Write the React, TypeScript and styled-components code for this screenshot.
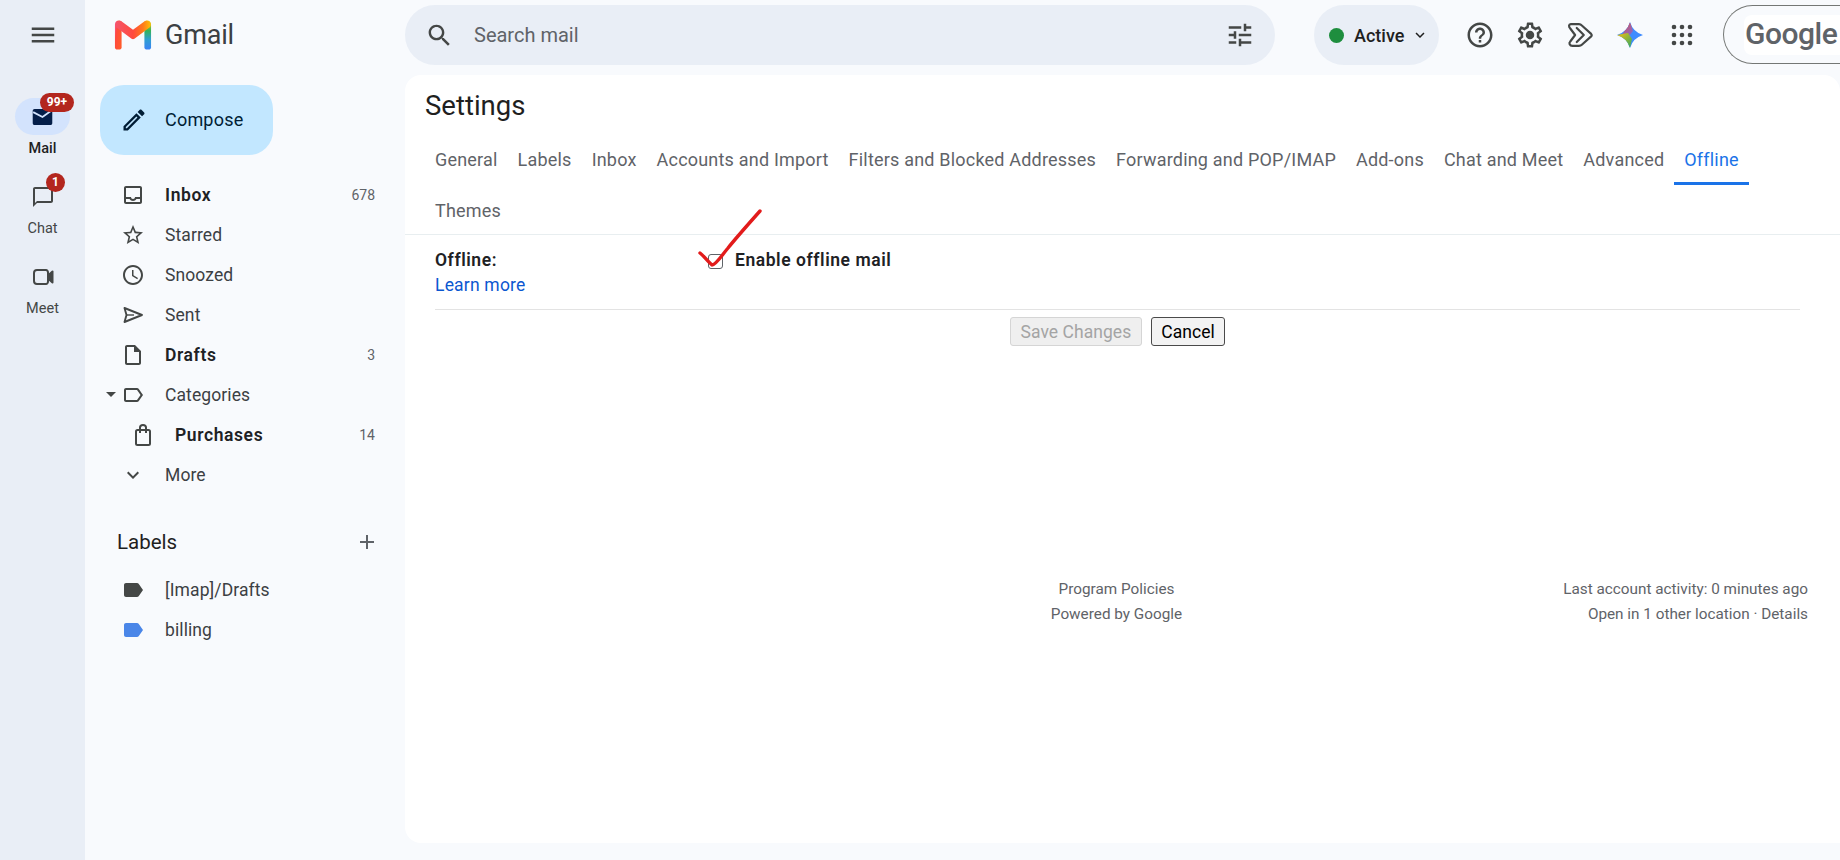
import React from "react";
import styled, { createGlobalStyle } from "styled-components";

const Global = createGlobalStyle`
  html, body { margin: 0; padding: 0; height: 100%; overflow: hidden; background: #f8fafd; }
  body { font-family: Roboto, "Liberation Sans", sans-serif; color: #1f1f1f; }
`;

const Shell = styled.div`
  display: grid;
  grid-template-columns: 85px 320px minmax(0, 1fr);
  grid-template-rows: 75px minmax(0, 1fr);
  width: 1840px;
  height: 860px;
  overflow: hidden;
  background: #f8fafd;
`;
const Rail = styled.nav`
  grid-row: 1 / 3;
  background: #e9eef6;
  display: flex;
  flex-direction: column;
  align-items: center;
  padding-top: 20px;
`;
const Burger = styled.div`
  height: 30px;
  display: flex;
  align-items: center;
  margin-bottom: 48px;
  color: #444746;
`;
const RailItem = styled.div<{ $active?: boolean }>`
  display: flex;
  flex-direction: column;
  align-items: center;
  height: 80px;
  font-size: 14.5px;
  line-height: 18px;
  font-weight: ${(p) => (p.$active ? 500 : 400)};
  color: ${(p) => (p.$active ? "#1f1f1f" : "#444746")};
`;
const RailIcon = styled.div<{ $active?: boolean }>`
  position: relative;
  width: 55px;
  height: 37px;
  border-radius: 19px;
  margin-bottom: 5px;
  display: flex;
  align-items: center;
  justify-content: center;
  background: ${(p) => (p.$active ? "#d3e3fd" : "transparent")};
  color: #444746;
`;
const Badge = styled.span<{ $wide?: boolean }>`
  position: absolute;
  top: -5px;
  left: ${(p) => (p.$wide ? "25px" : "31px")};
  height: 19px;
  min-width: ${(p) => (p.$wide ? "34px" : "19px")};
  border-radius: 10px;
  background: #b3261e;
  color: #fff;
  font-size: 12px;
  font-weight: 700;
  line-height: 19px;
  text-align: center;
`;
const Brand = styled.div`
  display: flex;
  align-items: center;
  padding: 0 0 5px 29px;
  gap: 13px;
  font-size: 27px;
  color: #3c4043;
  letter-spacing: -0.2px;
`;
const TopBar = styled.header`
  display: flex;
  align-items: flex-start;
  padding-top: 5px;
`;
const Search = styled.div`
  width: 870px;
  height: 60px;
  flex: none;
  border-radius: 30px;
  background: #e9eef6;
  display: flex;
  align-items: center;
  padding: 0 20px;
  box-sizing: border-box;
  color: #444746;
  font-size: 20px;
`;
const SearchText = styled.span`
  flex: 1;
  margin-left: 20px;
  color: #5f6368;
`;
const Status = styled.div`
  margin-left: 39px;
  width: 125px;
  height: 60px;
  flex: none;
  border-radius: 30px;
  background: #e9eef6;
  display: flex;
  align-items: center;
  padding-left: 15px;
  box-sizing: border-box;
  font-size: 18px;
  font-weight: 500;
  color: #1f1f1f;
  gap: 10px;
`;
const Dot = styled.span`
  width: 15px;
  height: 15px;
  border-radius: 50%;
  background: #1e8e3e;
`;
const Chevron = styled.svg`
  margin-left: -3px;
`;
const Actions = styled.div`
  display: flex;
  align-items: center;
  height: 60px;
  margin-left: 16px;
  color: #444746;
`;
const ActionSlot = styled.div`
  width: 50px;
  display: flex;
  justify-content: center;
  align-items: center;
`;
const AppsSlot = styled(ActionSlot)`
  padding-left: 4px;
  box-sizing: border-box;
`;
const GoogleChip = styled.div`
  margin-left: 18px;
  width: 160px;
  height: 59px;
  flex: none;
  box-sizing: border-box;
  border: 1px solid #747775;
  border-right: none;
  border-radius: 30px 0 0 30px;
  display: flex;
  align-items: center;
  padding-left: 20px;
`;
const GoogleWord = styled.span`
  display: block;
  padding: 0 1px;
  width: 100%;
  height: 40px;
  line-height: 38px;
  border-radius: 8px;
  background: #fff;
  color: #5f6368;
  font-size: 30px;
  font-weight: 500;
  letter-spacing: -0.5px;
`;
const Side = styled.aside`
  display: flex;
  flex-direction: column;
`;
const Compose = styled.div`
  margin: 10px 0 0 15px;
  width: 173px;
  height: 70px;
  border-radius: 24px;
  background: #c2e7ff;
  display: flex;
  align-items: center;
  padding: 0 0 1px 20px;
  box-sizing: border-box;
  gap: 17px;
  font-size: 18px;
  font-weight: 400;
  letter-spacing: 0.2px;
  color: #001d35;
`;
const NavList = styled.div`
  margin-top: 20px;
`;
const Row = styled.div<{ $bold?: boolean; $indent?: boolean }>`
  height: 40px;
  display: flex;
  align-items: center;
  padding: 0 30px 0 ${(p) => (p.$indent ? "46px" : "36px")};
  font-size: 17.5px;
  font-weight: ${(p) => (p.$bold ? 600 : 400)};
  letter-spacing: ${(p) => (p.$bold ? "0.6px" : "0.1px")};
  color: ${(p) => (p.$bold ? "#202124" : "#3c4043")};
  position: relative;
`;
const RowIcon = styled.span<{ $tint?: string }>`
  width: 24px;
  height: 24px;
  margin-right: 20px;
  color: ${(p) => p.$tint ?? "#444746"};
  display: flex;
`;
const RowLabel = styled.span`
  flex: 1;
`;
const Count = styled.span`
  font-size: 14px;
  font-weight: 400;
  letter-spacing: 0;
  color: #5f6368;
`;
const Caret = styled.span`
  position: absolute;
  left: 21px;
  top: 17px;
  width: 0;
  height: 0;
  border: 5px solid transparent;
  border-top-color: #444746;
  border-bottom: 0;
`;
const LabelsHead = styled.div`
  margin-top: 27px;
  margin-bottom: 8px;
  height: 40px;
  display: flex;
  align-items: center;
  padding: 0 26px 0 32px;
  font-size: 20.5px;
  font-weight: 400;
  color: #1f1f1f;
  justify-content: space-between;
`;
const AddIcon = styled.span`
  color: #5f6368;
  display: flex;
`;
const Panel = styled.main`
  background: #fff;
  border-radius: 16px 16px 0 16px;
  margin-bottom: 17px;
  min-width: 0;
  display: flex;
  flex-direction: column;
  position: relative;
`;
const Title = styled.h1`
  margin: 0;
  height: 61px;
  padding: 8px 0 0 20px;
  box-sizing: border-box;
  font-size: 27.5px;
  line-height: 46px;
  font-weight: 400;
  color: #1f1f1f;
`;
const Tabs = styled.div`
  display: flex;
  flex-wrap: wrap;
  padding: 0 40px 0 20px;
  border-bottom: 1px solid #e8eef0;
`;
const Tab = styled.div<{ $active?: boolean }>`
  height: 49px;
  padding: 0 10px;
  line-height: 48px;
  font-size: 18px;
  letter-spacing: 0.2px;
  color: ${(p) => (p.$active ? "#1a73e8" : "#5f6368")};
  box-sizing: border-box;
  border-bottom: 3px solid ${(p) => (p.$active ? "#1a73e8" : "transparent")};
  white-space: nowrap;
  &:last-child {
    line-height: 52px;
  }
`;
const OfflineRow = styled.div`
  display: flex;
  margin: 0 40px 0 30px;
  height: 75px;
  padding-top: 13px;
  box-sizing: border-box;
  border-bottom: 1px solid #e3e3e3;
  font-size: 17.5px;
`;
const RowHead = styled.div`
  width: 273px;
  line-height: 25px;
`;
const Strong = styled.div`
  font-weight: 600;
  letter-spacing: 0.55px;
  color: #202124;
`;
const Link = styled.div`
  color: #0b57d0;
  letter-spacing: 0.2px;
`;
const CheckLine = styled.label`
  display: flex;
  align-items: flex-start;
  line-height: 25px;
  font-weight: 600;
  letter-spacing: 0.55px;
  color: #202124;
`;
const Box = styled.span`
  width: 15px;
  height: 15px;
  margin: 6px 12px 0 0;
  box-sizing: border-box;
  border: 1.5px solid #5f6368;
  border-radius: 3px;
`;
const Mark = styled.svg`
  position: absolute;
  left: 287px;
  top: 134px;
`;
const Buttons = styled.div`
  display: flex;
  padding: 7px 0 0 605px;
  gap: 9px;
`;
const Btn = styled.div<{ $off?: boolean }>`
  height: 29px;
  box-sizing: border-box;
  padding: 0 9.5px;
  display: flex;
  align-items: center;
  font-size: 17.5px;
  letter-spacing: 0.05px;
  border-radius: 3px;
  border: 1px solid ${(p) => (p.$off ? "#d5d5d5" : "#4a4a4a")};
  background: ${(p) => (p.$off ? "#efefef" : "#f3f3f3")};
  color: ${(p) => (p.$off ? "#a4a4a4" : "#000")};
`;
const Footer = styled.footer`
  display: flex;
  justify-content: space-between;
  margin-top: 231px;
  padding: 0 32px 0 645px;
  font-size: 15.3px;
  line-height: 25px;
  color: #5f6368;
`;
const FootMid = styled.div`
  text-align: center;
  width: 133px;
  white-space: nowrap;
`;
const FootRight = styled.div`
  text-align: right;
`;

const I = ({ d, s = 24 }: { d: string; s?: number }) => (
  <svg width={s} height={s} viewBox="0 0 24 24" fill="currentColor"><path d={d} fillRule="evenodd" /></svg>
);

const P = {
  menu: "M3 18h18v-2H3v2zm0-5h18v-2H3v2zm0-7v2h18V6H3z",
  star: "M22 9.24l-7.19-.62L12 2 9.19 8.63 2 9.24l5.46 4.73L5.82 21 12 17.27 18.18 21l-1.63-7.03L22 9.24zM12 15.4l-3.76 2.27 1-4.28-3.32-2.88 4.38-.38L12 6.1l1.71 4.04 4.38.38-3.32 2.88 1 4.28L12 15.4z",
  clock: "M11.99 2C6.47 2 2 6.48 2 12s4.47 10 9.99 10C17.52 22 22 17.52 22 12S17.52 2 11.99 2zM12 20c-4.42 0-8-3.58-8-8s3.58-8 8-8 8 3.58 8 8-3.58 8-8 8zm.5-13H11v6l5.25 3.15.75-1.23-4.5-2.67z",
  inbox: "M19 3H5c-1.1 0-2 .9-2 2v14c0 1.1.9 2 2 2h14c1.1 0 2-.9 2-2V5c0-1.1-.9-2-2-2zm0 16H5v-3h3.56c.69 1.19 1.97 2 3.45 2s2.75-.81 3.45-2H19v3zm0-5h-4.99c0 1.1-.9 2-2 2s-2-.9-2-2H5V5h14v9z",
  draft: "M14 2H6c-1.1 0-1.99.9-1.99 2L4 20c0 1.1.89 2 1.99 2H18c1.1 0 2-.9 2-2V8l-6-6zM6 20V4h7v5h5v11H6z",
  labelO: "M17.63 5.84C17.27 5.33 16.67 5 16 5L5 5.01C3.9 5.01 3 5.9 3 7v10c0 1.1.9 1.99 2 1.99L16 19c.67 0 1.27-.33 1.63-.84L22 12l-4.37-6.16zM16 17H5V7h11l3.55 5L16 17z",
  labelF: "M17.63 5.84C17.27 5.33 16.67 5 16 5L5 5.01C3.9 5.01 3 5.9 3 7v10c0 1.1.9 1.99 2 1.99L16 19c.67 0 1.27-.33 1.63-.84L22 12l-4.37-6.16z",
  more: "M16.59 8.59L12 13.17 7.41 8.59 6 10l6 6 6-6z",
  add: "M19 13h-6v6h-2v-6H5v-2h6V5h2v6h6v2z",
  search: "M15.5 14h-.79l-.28-.27C15.41 12.59 16 11.11 16 9.5 16 5.91 13.09 3 9.5 3S3 5.91 3 9.5 5.91 16 9.5 16c1.61 0 3.09-.59 4.23-1.57l.27.28v.79l5 4.99L20.49 19l-4.99-5zm-6 0C7.01 14 5 11.99 5 9.5S7.01 5 9.5 5 14 7.01 14 9.5 11.99 14 9.5 14z",
  tune: "M3 17v2h6v-2H3zM3 5v2h10V5H3zm10 16v-2h8v-2h-8v-2h-2v6h2zM7 9v2H3v2h4v2h2V9H7zm14 4v-2H11v2h10zm-6-4h2V7h4V5h-4V3h-2v6z",
  help: "M11 18h2v-2h-2v2zm1-16C6.48 2 2 6.48 2 12s4.48 10 10 10 10-4.48 10-10S17.52 2 12 2zm0 18c-4.41 0-8-3.59-8-8s3.59-8 8-8 8 3.59 8 8-3.59 8-8 8zm0-14c-2.21 0-4 1.79-4 4h2c0-1.1.9-2 2-2s2 .9 2 2c0 2-3 1.75-3 5h2c0-2.25 3-2.5 3-5 0-2.21-1.79-4-4-4z",
  chat: "M20 2H4c-1.1 0-2 .9-2 2v18l4-4h14c1.1 0 2-.9 2-2V4c0-1.1-.9-2-2-2zm0 14H6l-2 2V4h16v12z",
  pen: "M3 17.25V21h3.75L17.81 9.94l-3.75-3.75L3 17.25zM5.92 19H5v-.92l9.06-9.06.92.92L5.92 19zM20.71 5.63l-2.34-2.34c-.2-.2-.45-.29-.71-.29s-.51.1-.7.29l-1.83 1.83 3.75 3.75 1.83-1.83c.39-.39.39-1.02 0-1.41z",
  gear: "M19.43 12.98c.04-.32.07-.64.07-.98 0-.34-.03-.66-.07-.98l2.11-1.65c.19-.15.24-.42.12-.64l-2-3.46c-.09-.16-.26-.25-.44-.25-.06 0-.12.01-.17.03l-2.49 1c-.52-.4-1.08-.73-1.69-.98l-.38-2.65C14.46 2.18 14.25 2 14 2h-4c-.25 0-.46.18-.49.42l-.38 2.65c-.61.25-1.17.59-1.69.98l-2.49-1c-.06-.02-.12-.03-.18-.03-.17 0-.34.09-.43.25l-2 3.46c-.13.22-.07.49.12.64l2.11 1.65c-.04.32-.07.65-.07.98 0 .33.03.66.07.98l-2.11 1.65c-.19.15-.24.42-.12.64l2 3.46c.09.16.26.25.44.25.06 0 .12-.01.17-.03l2.49-1c.52.4 1.08.73 1.69.98l.38 2.65c.03.24.24.42.49.42h4c.25 0 .46-.18.49-.42l.38-2.65c.61-.25 1.17-.59 1.69-.98l2.49 1c.06.02.12.03.18.03.17 0 .34-.09.43-.25l2-3.46c.12-.22.07-.49-.12-.64l-2.11-1.65zm-1.98-1.71c.04.31.05.52.05.73 0 .21-.02.43-.05.73l-.14 1.13.89.7 1.08.84-.7 1.21-1.27-.51-1.04-.42-.9.68c-.43.32-.84.56-1.25.73l-1.06.43-.16 1.13-.2 1.35h-1.4l-.19-1.35-.16-1.13-1.06-.43c-.43-.18-.83-.41-1.23-.71l-.91-.7-1.06.43-1.27.51-.7-1.21 1.08-.84.89-.7-.14-1.13c-.03-.31-.05-.54-.05-.74s.02-.43.05-.73l.14-1.13-.89-.7-1.08-.84.7-1.21 1.27.51 1.04.42.9-.68c.43-.32.84-.56 1.25-.73l1.06-.43.16-1.13.2-1.35h1.39l.19 1.35.16 1.13 1.06.43c.43.18.83.41 1.23.71l.91.7 1.06-.43 1.27-.51.7 1.21-1.07.85-.89.7.14 1.13z",
};

const SendIcon = () => (
  <svg width="24" height="24" viewBox="0 0 24 24" fill="none" stroke="currentColor" strokeWidth="1.9" strokeLinejoin="round">
    <path d="M3.5 5 L21 12 L3.5 19 L5.5 12 Z" />
    <path d="M5.5 12 H13" strokeWidth="1.4" />
  </svg>
);

const GmailLogo = () => (
  <svg width="38" height="30" viewBox="0 0 40 32" preserveAspectRatio="none">
    <defs>
      <linearGradient id="gmT" x1="0" y1="0" x2="0" y2="1">
        <stop offset="0" stopColor="#ffc107" />
        <stop offset="0.35" stopColor="#34b35a" />
        <stop offset="0.65" stopColor="#2f9fd0" />
        <stop offset="1" stopColor="#3b82f6" />
      </linearGradient>
      <linearGradient id="gmL" x1="0" y1="0" x2="1" y2="0.6">
        <stop offset="0" stopColor="#f8549a" />
        <stop offset="0.35" stopColor="#ff4a3d" />
        <stop offset="1" stopColor="#ff5a2c" />
      </linearGradient>
      <linearGradient id="gmV" x1="0" y1="0" x2="1" y2="0">
        <stop offset="0" stopColor="#f4556c" />
        <stop offset="0.5" stopColor="#ff4a3d" />
        <stop offset="0.78" stopColor="#ff7a1a" />
        <stop offset="1" stopColor="#ffc107" />
      </linearGradient>
    </defs>
    <path d="M1 5 C1 1 5 -0.5 8 1.6 L8 29 C8 30.6 7 31.5 5 31.5 L3.5 31.5 C2 31.5 1 30.5 1 29 Z" fill="url(#gmL)" />
    <path d="M32 1.6 C35 -0.5 39 1 39 5 L39 29 C39 30.5 38 31.5 36.5 31.5 L35 31.5 C33 31.5 32 30.6 32 29 Z" fill="url(#gmT)" />
    <path d="M2 3 C3.5 0.5 6.5 0 8.5 1.8 L20 10.5 L31.5 1.8 C33.5 0 37 0.3 38.5 3.5 C39.2 5.5 38.5 7.2 37 8.3 L21.5 20 C20.5 20.7 19.5 20.7 18.5 20 L3 8.3 C1.2 7 0.9 5 2 3 Z" fill="url(#gmV)" />
  </svg>
);

const GeminiStar = () => (
  <svg width="26" height="26" viewBox="0 0 26 26">
    <defs>
      <clipPath id="gemClip">
        <path d="M13 0 Q16 10 26 13 Q16 16 13 26 Q10 16 0 13 Q10 10 13 0 Z" />
      </clipPath>
      <linearGradient id="gemA" x1="0.2" y1="0" x2="1" y2="1">
        <stop offset="0" stopColor="#d9534f" />
        <stop offset="1" stopColor="#7f6bd8" />
      </linearGradient>
      <linearGradient id="gemB" x1="0" y1="0" x2="1" y2="1">
        <stop offset="0" stopColor="#f4c20d" />
        <stop offset="1" stopColor="#2fa866" />
      </linearGradient>
    </defs>
    <g clipPath="url(#gemClip)">
      <rect x="0" y="0" width="26" height="26" fill="#3f8cff" />
      <path d="M5 13 L13 0 L16 9 L13 13 Z" fill="url(#gemA)" />
      <path d="M0 13 L11 11 L15 17 L13 26 Z" fill="url(#gemB)" />
    </g>
  </svg>
);

const Flows = () => (
  <svg width="26" height="26" viewBox="0 0 24 24" fill="none" stroke="currentColor" strokeWidth="2" strokeLinejoin="round" strokeLinecap="round">
    <path d="M3.5 2 H11 C12 2 13 2.4 13.7 3.2 L22.3 11 C23 11.7 23 12.6 22.3 13.3 L13.7 21 C13 21.7 12 22 11 22 H5 C2.5 22 1.4 19.5 3 18 L7.5 12 L3 6 C1.4 4.5 1.5 2 3.5 2 Z" />
    <path d="M9 5.5 L15.5 12 L9 18.5" />
  </svg>
);

const Apps = () => (
  <svg width="22" height="22" viewBox="0 0 22 22" fill="currentColor">
    {[3, 11, 19].flatMap((y) => [3, 11, 19].map((x) => <circle key={`${x}-${y}`} cx={x} cy={y} r="2.3" />))}
  </svg>
);

const MailIcon = () => (
  <svg width="21" height="16" viewBox="0 0 22 18">
    <path d="M2 0 H20 C21 0 22 1 22 2 V16 C22 17 21 18 20 18 H2 C1 18 0 17 0 16 V2 C0 1 1 0 2 0 Z" fill="#041e49" />
    <path d="M0.5 3.5 L11 9 L21.5 1.5" fill="none" stroke="#d3e3fd" strokeWidth="2" />
  </svg>
);

const Bag = () => (
  <svg width="24" height="24" viewBox="0 0 24 24" fill="none" stroke="currentColor" strokeWidth="2">
    <rect x="5" y="7" width="14" height="15" rx="1.5" />
    <path d="M9 10 V4.5 C9 2.8 10.2 2 12 2 C13.8 2 15 2.8 15 4.5 V10" />
  </svg>
);

const Video = () => (
  <svg width="24" height="24" viewBox="0 0 24 24" fill="none" stroke="currentColor" strokeWidth="2" strokeLinejoin="round">
    <path d="M17 10.5 V7.5 C17 6.5 16.2 5 15 5 H6 C4 5 3 6.5 3 8 V16 C3 17.5 4 19 6 19 H15 C16.2 19 17 17.5 17 16.5 V13.5" />
    <path d="M17 10.5 L21.5 6.5 V17.5 L17 13.5 Z" fill="currentColor" />
  </svg>
);

const tabs = ["General", "Labels", "Inbox", "Accounts and Import", "Filters and Blocked Addresses", "Forwarding and POP/IMAP", "Add-ons", "Chat and Meet", "Advanced", "Offline", "Themes"];

export default function App() {
  return (
    <>
      <Global />
      <Shell>
        <Rail>
          <Burger><I d={P.menu} s={30} /></Burger>
          <RailItem $active>
            <RailIcon $active><MailIcon /><Badge $wide>99+</Badge></RailIcon>
            Mail
          </RailItem>
          <RailItem>
            <RailIcon><I d={P.chat} /><Badge>1</Badge></RailIcon>
            Chat
          </RailItem>
          <RailItem>
            <RailIcon><Video /></RailIcon>
            Meet
          </RailItem>
        </Rail>
        <Brand><GmailLogo />Gmail</Brand>
        <TopBar>
          <Search>
            <I d={P.search} s={29} />
            <SearchText>Search mail</SearchText>
            <I d={P.tune} s={30} />
          </Search>
          <Status>
            <Dot />Active
            <Chevron width="18" height="18" viewBox="0 0 24 24" fill="currentColor"><path d={P.more} /></Chevron>
          </Status>
          <Actions>
            <ActionSlot><I d={P.help} s={30} /></ActionSlot>
            <ActionSlot>
              <svg width="30" height="30" viewBox="0 0 24 24" fill="currentColor"><path d={P.gear} fillRule="evenodd" /><circle cx="12" cy="12" r="3.4" /></svg>
            </ActionSlot>
            <ActionSlot><Flows /></ActionSlot>
            <ActionSlot><GeminiStar /></ActionSlot>
            <AppsSlot><Apps /></AppsSlot>
          </Actions>
          <GoogleChip><GoogleWord>Google</GoogleWord></GoogleChip>
        </TopBar>
        <Side>
          <Compose><I d={P.pen} s={28} />Compose</Compose>
          <NavList>
            <Row $bold><RowIcon><I d={P.inbox} /></RowIcon><RowLabel>Inbox</RowLabel><Count>678</Count></Row>
            <Row><RowIcon><I d={P.star} /></RowIcon><RowLabel>Starred</RowLabel></Row>
            <Row><RowIcon><I d={P.clock} /></RowIcon><RowLabel>Snoozed</RowLabel></Row>
            <Row><RowIcon><SendIcon /></RowIcon><RowLabel>Sent</RowLabel></Row>
            <Row $bold><RowIcon><I d={P.draft} /></RowIcon><RowLabel>Drafts</RowLabel><Count>3</Count></Row>
            <Row><Caret /><RowIcon><I d={P.labelO} /></RowIcon><RowLabel>Categories</RowLabel></Row>
            <Row $bold $indent><RowIcon><Bag /></RowIcon><RowLabel>Purchases</RowLabel><Count>14</Count></Row>
            <Row><RowIcon><I d={P.more} /></RowIcon><RowLabel>More</RowLabel></Row>
          </NavList>
          <LabelsHead>Labels<AddIcon><I d={P.add} s={24} /></AddIcon></LabelsHead>
          <Row><RowIcon><I d={P.labelF} /></RowIcon><RowLabel>[Imap]/Drafts</RowLabel></Row>
          <Row><RowIcon $tint="#4a86e8"><I d={P.labelF} /></RowIcon><RowLabel>billing</RowLabel></Row>
        </Side>
        <Panel>
          <Title>Settings</Title>
          <Tabs>
            {tabs.map((t) => <Tab key={t} $active={t === "Offline"}>{t}</Tab>)}
          </Tabs>
          <OfflineRow>
            <RowHead>
              <Strong>Offline:</Strong>
              <Link>Learn more</Link>
            </RowHead>
            <CheckLine><Box />Enable offline mail</CheckLine>
          </OfflineRow>
          <Mark width="72" height="62" viewBox="0 0 72 62" fill="none">
            <path d="M8 44 C12 47 15 52 20 56 C24 56 30 46 36 39 C44 29 52 20 68 2" stroke="#e21b1b" strokeWidth="3.4" strokeLinecap="round" strokeLinejoin="round" />
          </Mark>
          <Buttons>
            <Btn $off>Save Changes</Btn>
            <Btn>Cancel</Btn>
          </Buttons>
          <Footer>
            <FootMid>Program Policies<br />Powered by Google</FootMid>
            <FootRight>Last account activity: 0 minutes ago<br />Open in 1 other location · Details</FootRight>
          </Footer>
        </Panel>
      </Shell>
    </>
  );
}
